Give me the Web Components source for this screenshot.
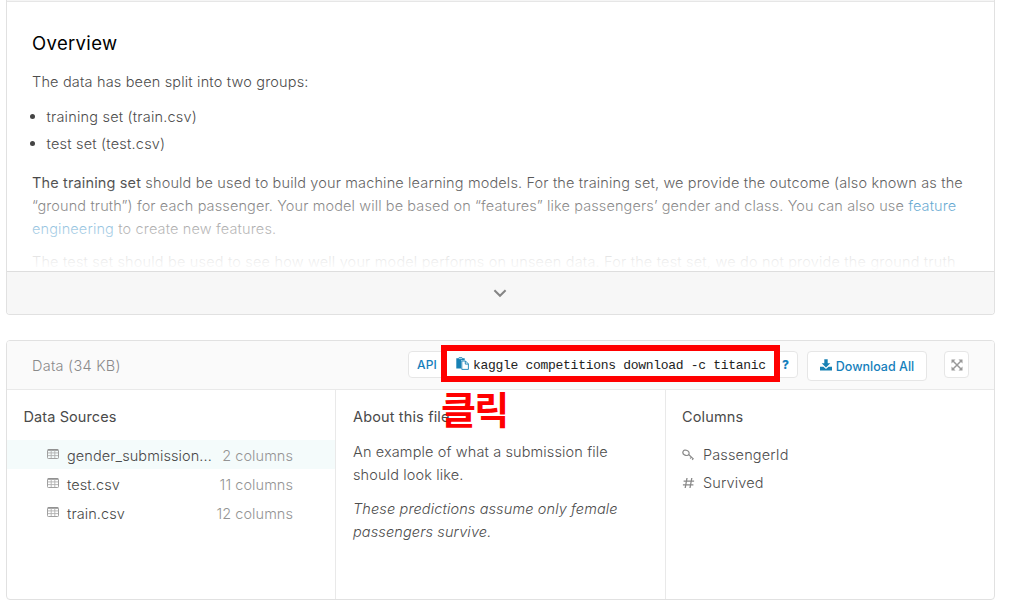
<!DOCTYPE html>
<html lang="en">
<head>
<meta charset="utf-8">
<title>Titanic data</title>
<style>
body{margin:0;background:#fff;font:300 14.5px/23px Inter,"Noto Sans CJK KR",sans-serif;letter-spacing:.145px;color:#4d4d4d}
</style>
</head>
<body>
<data-page></data-page>
<script>
const define=(name,html)=>customElements.define(name,class extends HTMLElement{
  constructor(){super();this.attachShadow({mode:'open'}).innerHTML=html;}
});

define('overview-card',`<style>
:host{display:flex;flex-direction:column;box-sizing:border-box;height:315px;border:1px solid #e1e1e1;border-top:0;border-radius:0 0 4px 4px;overflow:hidden}
.top{flex:none;height:1px;background:#f5f5f5;border-bottom:1px solid #e6e6e6}
.body{position:relative;flex:1;overflow:hidden;padding:27px 20px 0 25px;min-height:0}
.fade{position:absolute;left:0;right:0;bottom:0;height:100px;background:linear-gradient(rgba(255,255,255,0),#fff);pointer-events:none}
button{flex:none;display:flex;align-items:center;justify-content:center;box-sizing:border-box;height:43px;border:0;border-top:1px solid #dedede;background:#f7f7f7;padding:0 1px 0 0}
svg{display:block}
</style>
<div class="top"></div>
<div class="body"><slot></slot><div class="fade"></div></div>
<button aria-label="Expand"><svg width="14" height="9" viewBox="0 0 14 9"><path d="M1.4 1.2 7 6.8l5.6-5.6" fill="none" stroke="#858585" stroke-width="2"/></svg></button>`);

define('overview-text',`<style>
:host{display:block;white-space:nowrap}
h2{margin:0;font-size:18.5px;line-height:28px;font-weight:400;color:#000;letter-spacing:.35px}
p{margin:0 0 10px}
.intro{margin-top:13px;margin-bottom:12px;letter-spacing:.17px}
ul{list-style:none;margin:0 0 16px;padding:0}
li{display:flex;align-items:center;height:23px;margin-bottom:4px;letter-spacing:.2px}
li::before{content:"";width:5px;height:5px;border-radius:50%;background:#444;margin:0 12px 0 -2.5px}
b{font-weight:400;color:#3c3c3c}
a{color:#1680bc;font-weight:300}
.b{letter-spacing:.11px}.t{letter-spacing:.182px}
</style>
<h2>Overview</h2>
<p class="intro">The data has been split into two groups:</p>
<ul><li>training set (train.csv)</li><li>test set (test.csv)</li></ul>
<p><b>The training set</b> should be used to build your machine learning models. For the training set, we provide the outcome (also known as the<br><span class="b">“ground truth”) for each passenger. Your model will be based on “features” like passengers’ gender and class. You can also use <a>feature</a></span><br><a>engineering</a> to create new features.</p>
<p class="t">The test set should be used to see how well your model performs on unseen data. For the test set, we do not provide the ground truth</p>`);

define('data-card',`<style>
:host{display:flex;flex-direction:column;box-sizing:border-box;height:260px;border:1px solid #e1e1e1;border-radius:4px;overflow:hidden}
.cols{flex:1;display:grid;grid-template-columns:328px 330px 1fr}
.cols ::slotted(*){border-left:1px solid #e9e9e9}
.cols ::slotted(source-list){border-left:0}
</style><slot name="head"></slot><div class="cols"><slot></slot></div>`);

define('data-head',`<style>
:host{display:flex;align-items:flex-start;box-sizing:border-box;height:49px;padding:10px 25px 0 25px;background:#fafafa;border-bottom:1px solid #e9e9e9}
.t{flex:1;margin-top:3px;color:#8a8a8a;letter-spacing:.25px}
</style><div class="t">Data (34 KB)</div><slot></slot>`);

define('api-group',`<style>
:host{display:flex;box-sizing:border-box;width:390px;height:27px;background:#fff;border:1px solid #e6e6e6;border-radius:4px;align-items:center;color:#1680bc;font-size:12px;letter-spacing:.2px;line-height:25px}
.api{width:21px;padding-left:8px;font-weight:500}
.cmd{position:relative;display:flex;align-items:center;box-sizing:border-box;width:339px;height:37px;margin:-2px 0 0 3px;flex:none;border:6px solid #f00;background:#fff;padding-left:9px}
code{font:13px/25px "Liberation Mono",monospace;letter-spacing:-.292px;color:#222;margin:3px 0 0 4px;white-space:pre}
.note{position:absolute;left:-6px;top:29px;font:700 38px/56px "Noto Sans CJK KR",sans-serif;letter-spacing:-1.7px;color:#f00;white-space:nowrap}
.q{font-weight:800;font-size:12px;width:14px;margin-left:2px}
svg{display:block;flex:none}
</style><span class="api">API</span>
<div class="cmd"><svg width="13" height="13" viewBox="0 0 13 13"><path d="M.3 1.2h2.5V.2h3.4v1h2.5v2H5.2v8.2H.3z" fill="#1781b4"/><path d="M3 1.6h3" stroke="#fff" stroke-width=".7"/><path d="M5.8 4h3.7l2.9 2.9v5.5H5.8z" fill="#fff" stroke="#1781b4" stroke-width=".9"/><path d="M9.3 4v3.1h3.1" fill="none" stroke="#1781b4" stroke-width=".9"/></svg><code>kaggle competitions download -c titanic</code><span class="note">클릭</span></div>
<span class="q">?</span>`);

define('download-button',`<style>
:host{display:flex;box-sizing:border-box;width:120px;height:30px;margin-left:9px;align-items:center;justify-content:center;background:#fff;border:1px solid #e6e6e6;border-radius:4px;color:#1680bc;font-weight:500;font-size:12.5px;letter-spacing:0;white-space:nowrap}
svg{margin-right:4px;margin-top:-3px}
</style><svg width="12" height="12" viewBox="0 0 12 12" fill="#1781b4"><path d="M4.3.3h3.4v3.9h2.6L6 8.6 1.7 4.2h2.6z"/><path d="M0 7.8h3.4L6 10.1l2.6-2.3H12v3.6H0z"/></svg><span>Download All</span>`);

define('full-button',`<style>
:host{display:flex;box-sizing:border-box;width:25px;height:27px;margin-left:17px;align-items:center;justify-content:center;background:#fff;border:1px solid #e6e6e6;border-radius:4px}
</style><svg width="12" height="12" viewBox="0 0 12 12"><path d="M2 2l8 8M10 2l-8 8" stroke="#999" stroke-width="1.5"/><path d="M.5.5h4l-4 4zM11.5.5v4l-4-4zM.5 11.5v-4l4 4zM11.5 11.5h-4l4-4z" fill="#999"/></svg>`);

define('source-list',`<style>
:host{display:block;padding-top:15px}
h3{margin:0 0 12px 16.5px;font-size:14.5px;line-height:23px;font-weight:400;letter-spacing:.1px;color:#4a4a4a}
</style><h3>Data Sources</h3><slot></slot>`);

customElements.define('source-row',class extends HTMLElement{
  constructor(){super();this.attachShadow({mode:'open'}).innerHTML=`<style>
:host{display:flex;height:29px;box-sizing:border-box;padding:4px 42px 0 40px;align-items:flex-start;line-height:23px}
:host([active]){background:#f4fbfb}
svg{margin:5px 8px 0 0;flex:none}
.n{flex:1;color:#484848;letter-spacing:.09px}
.c{color:#949494;letter-spacing:.06px}
</style><svg width="12" height="10" viewBox="0 0 12 10"><rect x=".5" y=".5" width="11" height="9" rx=".8" fill="none" stroke="#a0a0a0"/><path d="M1 1h10" stroke="#8c8c8c" stroke-width="1.4"/><path d="M1 3.9h10M1 6.6h10M4.2 1v8M7.8 1v8" stroke="#b0b0b0" stroke-width=".9"/></svg><span class="n"><slot></slot></span><span class="c"></span>`;}
  connectedCallback(){this.shadowRoot.querySelector('.c').textContent=this.getAttribute('count')+' columns';}
});

define('about-file',`<style>
:host{display:block;padding:15px 20px 0 17px;white-space:nowrap}
h3{margin:0 0 12px;font-size:14.5px;line-height:23px;font-weight:400;color:#4a4a4a}
p{margin:0 0 11px;letter-spacing:.125px}
</style><h3>About this file</h3><p>An example of what a submission file<br>should look like.</p><p><i>These predictions assume only female<br>passengers survive.</i></p>`);

define('column-list',`<style>
:host{display:block;padding:15px 16px 0}
h3{margin:0 0 15px;font-size:14.5px;line-height:23px;font-weight:400;color:#4a4a4a}
div{display:flex;align-items:center;height:23px;margin-bottom:5px}
svg{margin-right:8px}
</style><h3>Columns</h3>
<div><svg width="13" height="12" viewBox="0 0 13 12" fill="none" stroke="#8c8c8c" stroke-width="1.2"><ellipse cx="4" cy="3.8" rx="3.2" ry="2.6" transform="rotate(25 4 3.8)"/><path d="M6.6 5.5l5 4.6M9.4 8l-1.3 1.5M11.2 9.6l-1 1.2"/></svg>PassengerId</div>
<div><svg width="13" height="12" viewBox="0 0 13 12" fill="none" stroke="#888" stroke-width="1.3"><path d="M5 1 3.2 11M9.8 1 8 11M1.6 4.1h10.5M.9 7.9h10.5"/></svg>Survived</div>`);

define('data-page',`<style>
:host{display:flex;flex-direction:column;gap:25px;width:989px;height:608px;margin-left:6px;overflow:hidden}
</style>
<overview-card><overview-text></overview-text></overview-card>
<data-card>
<data-head slot="head"><api-group></api-group><download-button></download-button><full-button></full-button></data-head>
<source-list><source-row active count="2">gender_submission...</source-row><source-row count="11">test.csv</source-row><source-row count="12">train.csv</source-row></source-list>
<about-file></about-file>
<column-list></column-list>
</data-card>`);
</script>
</body>
</html>
